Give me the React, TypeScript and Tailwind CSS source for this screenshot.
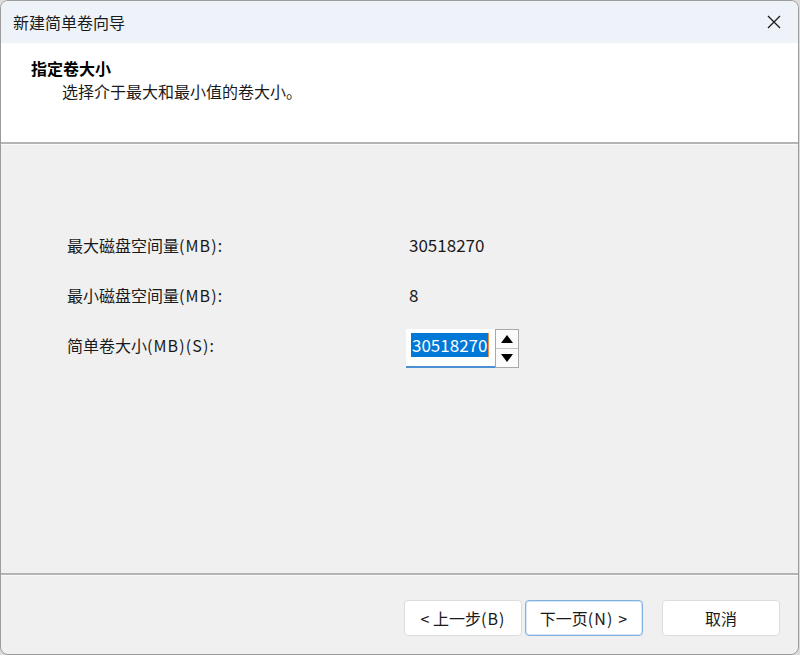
import React from "react";

const font = { fontFamily: '"Noto Sans CJK SC", "Noto Sans", sans-serif' };

function L({ children }: { children: React.ReactNode }) {
  return <span className="tracking-[1.1px]">{children}</span>;
}

function Btn({ children, focused }: { children: React.ReactNode; focused?: boolean }) {
  return (
    <div
      className={
        "flex h-[36px] w-[118px] items-center justify-center rounded-[4px] bg-white text-[16px] text-[#1a1a1a] " +
        (focused ? "border border-[#7fb0e0] shadow-[inset_0_0_0_1px_#d6e7f7]" : "border border-[#dcdcdc]")
      }
    >
      {children}
    </div>
  );
}

export default function App() {
  return (
    <div className="h-[655px] w-[800px] bg-[#dcdcdc]" style={font}>
      <div className="flex h-[655px] w-[799px] flex-col overflow-hidden rounded-[8px] border border-[#9c9c9c] bg-[#f0f0f0]">
        {/* title bar */}
        <div className="flex h-[42px] shrink-0 items-center justify-between bg-[#eef3f9] pl-[12px] pr-[12px]">
          <span className="text-[16px] text-[#1a1a1a]">新建简单卷向导</span>
          <svg width="16" height="16" viewBox="0 0 16 16" className="mr-[4px]">
            <path d="M2 2 L14 14 M14 2 L2 14" stroke="#1a1a1a" strokeWidth="1.3" fill="none" />
          </svg>
        </div>
        {/* header */}
        <div className="flex h-[99px] shrink-0 flex-col bg-white pl-[30px] pt-[13px]">
          <div className="text-[16px] font-bold leading-[24px] text-[#000]">指定卷大小</div>
          <div className="pl-[31px] text-[16px] leading-[23px] text-[#1a1a1a]">选择介于最大和最小值的卷大小。</div>
        </div>
        <div className="h-[2px] shrink-0 bg-[#b4b4b4]" />
        <div className="h-[1px] shrink-0 bg-[#fafafa]" />
        {/* body */}
        <div className="flex flex-1 flex-col pl-[66px] pt-[86px] text-[16px] text-[#1a1a1a]">
          <div className="flex h-[28px] items-center">
            <span className="w-[342px]">
              最大磁盘空间量<L>(MB):</L>
            </span>
            <span className="text-[17px]">30518270</span>
          </div>
          <div className="mt-[22px] flex h-[28px] items-center">
            <span className="w-[342px]">
              最小磁盘空间量<L>(MB):</L>
            </span>
            <span className="text-[17px]">8</span>
          </div>
          <div className="mt-[20px] flex items-start">
            <span className="mt-[2px] flex h-[28px] w-[339px] items-center">
              简单卷大小<L>(MB)(S):</L>
            </span>
            <div className="flex h-[39px] items-stretch">
              <div className="relative flex w-[89px] items-start border-b-[2px] border-[#4a90d0] bg-white pl-[5px] pt-[4px]">
                <span className="flex h-[24px] items-center bg-[#0078d7] px-[1px] text-[17px] text-white">30518270</span>
                <span className="h-[24px] w-[1px] bg-[#f08a3c]" />
              </div>
              <div className="flex w-[24px] flex-col border border-[#a8a8a8] bg-[#f0f0f0]">
                <div className="flex flex-1 items-center justify-center border-b border-[#c4c4c4] bg-[#fbfbfb]">
                  <svg width="12" height="8" viewBox="0 0 12 8">
                    <path d="M6 0 L12 8 L0 8 Z" fill="#000" />
                  </svg>
                </div>
                <div className="flex flex-1 items-center justify-center bg-[#fbfbfb]">
                  <svg width="12" height="8" viewBox="0 0 12 8">
                    <path d="M0 0 L12 0 L6 8 Z" fill="#000" />
                  </svg>
                </div>
              </div>
            </div>
          </div>
        </div>
        <div className="h-[2px] shrink-0 bg-[#b4b4b4]" />
        <div className="h-[1px] shrink-0 bg-[#fafafa]" />
        {/* footer */}
        <div className="flex h-[78px] shrink-0 items-start justify-end pr-[18px] pt-[24px]">
          <div className="flex gap-[3px]">
            <Btn>
              &lt; 上一步<L>(B)</L>
            </Btn>
            <Btn focused>
              下一页<L>(N) &gt;</L>
            </Btn>
          </div>
          <div className="ml-[19px]">
            <Btn>取消</Btn>
          </div>
        </div>
      </div>
    </div>
  );
}
